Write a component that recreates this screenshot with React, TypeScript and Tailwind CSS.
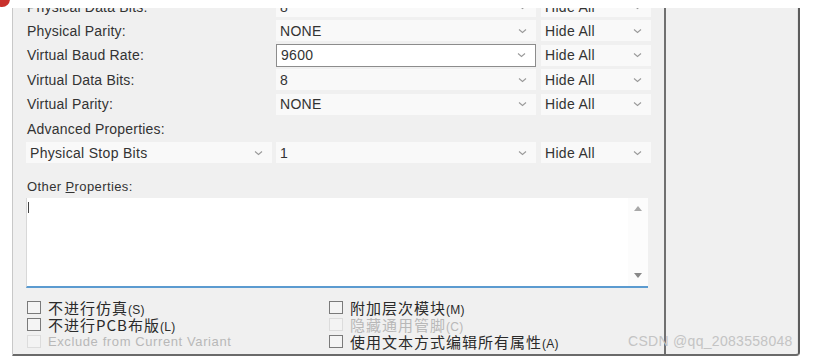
import React from 'react';

const LATIN = "font-['Liberation_Sans',Arial,sans-serif]";

function Chevron() {
  return (
    <svg width="9" height="6" viewBox="0 0 9 6" className="shrink-0">
      <path d="M1 1.5 L4.5 4.5 L8 1.5" fill="none" stroke="#9a9a9a" strokeWidth="1.1" />
    </svg>
  );
}

function Combo({ value, className }: { value: string; className: string }) {
  return (
    <div className={`h-[21px] flex items-center justify-between pl-[4px] pr-[9px] bg-[#f9f9f9] ${className}`}>
      <span className="text-[14px] tracking-[0.3px] text-[#333] leading-none">{value}</span>
      <Chevron />
    </div>
  );
}

type Row = { label: string; value: string; focused?: boolean };

const ROWS: Row[] = [
  { label: 'Physical Data Bits:', value: '8' },
  { label: 'Physical Parity:', value: 'NONE' },
  { label: 'Virtual Baud Rate:', value: '9600', focused: true },
  { label: 'Virtual Data Bits:', value: '8' },
  { label: 'Virtual Parity:', value: 'NONE' },
];

function CheckItem({ cjk, key2, latin, disabled }: { cjk?: string; key2?: string; latin?: string; disabled?: boolean }) {
  return (
    <div className="h-[17px] flex items-center gap-[7px]">
      <div
        className={`w-[14px] h-[13px] shrink-0 border ${disabled ? 'border-[#dcdcdc] bg-[#f3f3f3]' : 'border-[#7a7a7a] bg-[#f4f4f4]'}`}
      />
      {latin ? (
        <span className={`text-[13px] tracking-[0.6px] leading-[17px] ${disabled ? 'text-[#b8b8b8]' : 'text-[#333]'}`}>{latin}</span>
      ) : (
        <span className={`block h-[17px] leading-[17px] whitespace-nowrap ${disabled ? 'text-[#b8b8b8]' : 'text-[#2a2a2a]'}`}>
          <span className="font-['Noto_Sans_CJK_SC',sans-serif] text-[15px] tracking-[1px]">{cjk}</span>
          <span className="text-[12px] tracking-[0.3px]">{key2}</span>
        </span>
      )}
    </div>
  );
}

export default function App() {
  return (
    <div className={`relative w-[818px] h-[360px] bg-white overflow-hidden ${LATIN}`}>
      {/* cut-off red logo */}
      <div className="absolute -left-[6px] -top-[9px] w-[16px] h-[16px] rounded-full bg-[#c9302c]" />

      <div className="mt-[8px] ml-[12px] w-[788px] h-[348px] flex bg-[#f0f0f0] border-l border-l-[#c8c8c8] border-r-2 border-r-[#5c5c5c] border-b-2 border-b-[#6a6a6a] rounded-br-[4px] overflow-hidden">
        {/* left area */}
        <div className="w-[651px] pl-[13px] flex flex-col">
          <div className="-mt-[13.6px]">
            {ROWS.map((r) => (
              <div key={r.label} className="h-[24.4px] flex items-center">
                <div className="w-[250px] pl-[1px] text-[14px] tracking-[0.2px] text-[#333] leading-none">{r.label}</div>
                <Combo value={r.value} className={`w-[260px] ${r.focused ? 'h-[23px] border border-[#8c8c8c] bg-white' : ''}`} />
                <Combo value="Hide All" className="w-[110px] ml-[5px]" />
              </div>
            ))}
            <div className="h-[24.4px] flex items-center pl-[1px] text-[14px] tracking-[0.2px] text-[#333] leading-none">
              Advanced Properties:
            </div>
            <div className="h-[24.4px] flex items-center">
              <Combo value="Physical Stop Bits" className="w-[246px] mr-[4px]" />
              <Combo value="1" className="w-[260px]" />
              <Combo value="Hide All" className="w-[110px] ml-[5px]" />
            </div>
          </div>

          <div className="mt-[13.8px] h-[16px] flex items-center pl-[1px] text-[13px] tracking-[0.4px] text-[#333] leading-none">
            Other <span className="underline ml-[4px]">P</span>roperties:
          </div>

          <div className="mt-[3px] w-[622px] h-[90px] flex bg-white border-l border-l-[#d8d8d8] border-b-2 border-b-[#5b9bd0]">
            <div className="flex-1 pl-[1px] pt-[4px]">
              <div className="w-[1px] h-[11px] bg-[#444]" />
            </div>
            <div className="w-[20px] flex flex-col items-center justify-between py-[8px] bg-[#fcfcfc]">
              <svg width="8" height="5" viewBox="0 0 8 5"><path d="M0 5 L4 0 L8 5 Z" fill="#a8a8a8" /></svg>
              <svg width="8" height="5" viewBox="0 0 8 5"><path d="M0 0 L4 5 L8 0 Z" fill="#888" /></svg>
            </div>
          </div>

          <div className="mt-[11.5px] pl-[1px] grid grid-cols-[302px_1fr]">
            <CheckItem cjk="不进行仿真" key2="(S)" />
            <CheckItem cjk="附加层次模块" key2="(M)" />
            <CheckItem cjk="不进行PCB布版" key2="(L)" />
            <CheckItem cjk="隐藏通用管脚" key2="(C)" disabled />
            <CheckItem latin="Exclude from Current Variant" disabled />
            <CheckItem cjk="使用文本方式编辑所有属性" key2="(A)" />
          </div>
        </div>

        {/* separator */}
        <div className="w-[2px] bg-[#707070]" />

        {/* right panel */}
        <div className="flex-1 border-r border-r-[#e4e4e4]" />
      </div>

      {/* watermark */}
      <div className="absolute left-[628px] top-[334px] text-[14px] leading-none text-[#c4c4c4] tracking-[0.3px]">
        CSDN @qq_2083558048
      </div>
    </div>
  );
}
